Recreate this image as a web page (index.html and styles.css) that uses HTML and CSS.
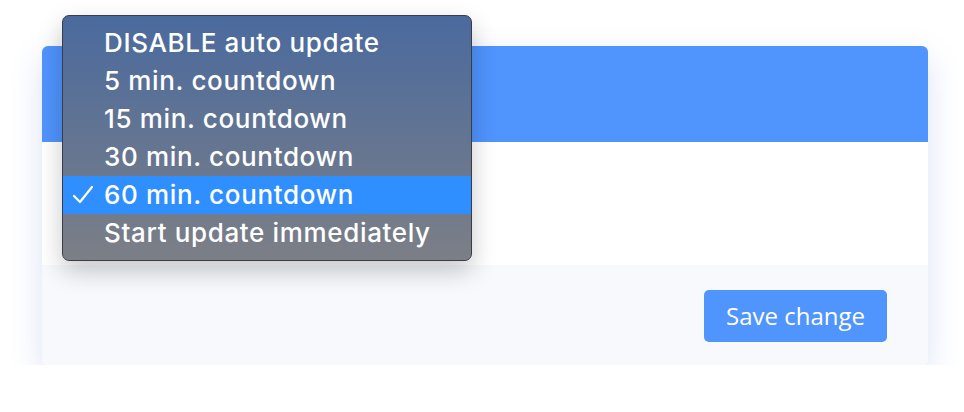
FILE: index.html
```html
<!DOCTYPE html>
<html lang="en">
<head>
    <meta charset="UTF-8">
    <meta name="viewport" content="width=device-width, initial-scale=1.0">
    <title>Auto update</title>
    <link rel="stylesheet" href="styles.css">
</head>
<body>
    <div class="card">
        <div class="card-header"></div>
        <div class="card-body"></div>
        <div class="card-footer">
            <button type="button" class="save-btn">Save change</button>
        </div>
    </div>

    <!-- native select popup -->
    <ul class="select-menu">
        <li>DISABLE auto update</li>
        <li>5 min. countdown</li>
        <li>15 min. countdown</li>
        <li>30 min. countdown</li>
        <li class="selected">
            <svg class="check" width="22" height="20" viewBox="0 0 22 20"><polyline points="2,11 8,17 20,2" fill="none" stroke="#ffffff" stroke-width="2.2" stroke-linecap="round" stroke-linejoin="round"/></svg>60 min. countdown
        </li>
        <li>Start update immediately</li>
    </ul>
</body>
</html>
```

FILE: styles.css
```css
/* Body styles */
body {
    margin: 0;
    background-color: #ffffff;
    font-family: "Open Sans", Arial, sans-serif;
}

/* Card styles */
.card {
    width: 886px;
    margin: 46px 0 0 42px;
    border-radius: 6px;
    overflow: hidden;
    box-shadow: 0 12px 32px rgba(80, 115, 210, 0.2);
}

.card-header {
    height: 96px;
    background-color: #5094fe;
}

.card-body {
    height: 123px;
    background-color: #ffffff;
}

.card-footer {
    height: 100px;
    background-color: #f7f9fd;
    display: flex;
    justify-content: flex-end;
    align-items: flex-start;
    padding: 25px 41px 0 0;
    box-sizing: border-box;
}

/* Button styles */
.save-btn {
    width: 183px;
    height: 52px;
    background-color: #5094fe;
    color: #ffffff;
    border: none;
    border-radius: 5px;
    font-family: "Open Sans", Arial, sans-serif;
    font-size: 24px;
    padding: 0 0 2px 0;
    cursor: pointer;
}

/* Dropdown menu styles */
.select-menu {
    position: absolute;
    left: 62px;
    top: 15px;
    width: 408px;
    margin: 0;
    padding: 8px 0 8px 0;
    list-style: none;
    border: 1px solid #3a3d44;
    border-radius: 7px;
    background: linear-gradient(#4a6a9e, #7c7f86);
    box-shadow: 0 10px 24px rgba(0, 0, 0, 0.22);
    font-family: Inter, "Noto Sans", sans-serif;
    font-size: 26px;
    font-weight: 500;
    letter-spacing: 0.65px;
    color: #ffffff;
}

.select-menu li {
    height: 38px;
    line-height: 38px;
    padding-left: 41px;
    position: relative;
    white-space: nowrap;
}

.select-menu li.selected {
    background-color: #2f8ffe;
}

.check {
    position: absolute;
    left: 9px;
    top: 9px;
}
```
